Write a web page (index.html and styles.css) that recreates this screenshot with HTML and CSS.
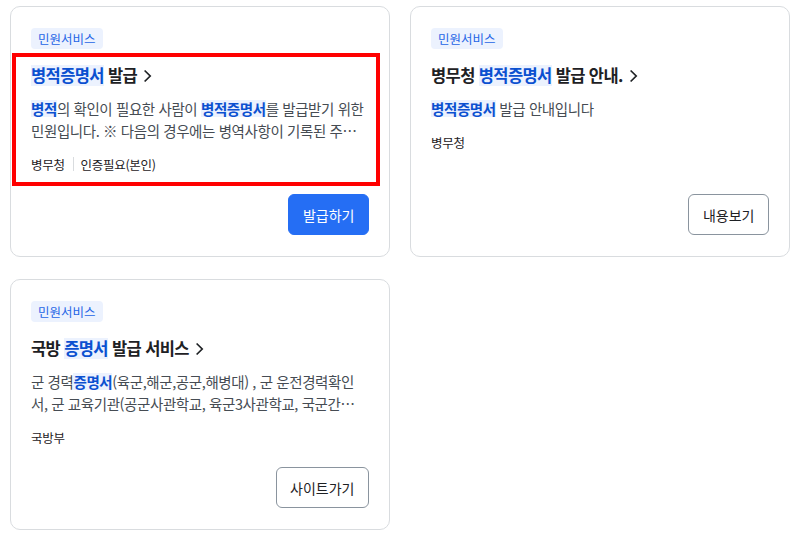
FILE: index.html
```html
<!DOCTYPE html>
<html lang="ko">
<head>
<meta charset="utf-8">
<title>검색 결과</title>
<link rel="stylesheet" href="styles.css">
</head>
<body>
<div class="grid">
  <article class="card">
    <span class="badge">민원서비스</span>
    <div class="title"><span class="hl">병적증명서</span> 발급<svg class="chev" viewBox="0 0 9 14" width="9" height="14"><path d="M1.6 1.5 L7.2 7 L1.6 12.5"/></svg></div>
    <p class="desc"><span class="hl">병적</span>의 확인이 필요한 사람이 <span class="hl">병적증명서</span>를 발급받기 위한 민원입니다. ※ 다음의 경우에는 병역사항이 기록된 주민등록표 초본을 발급받으시기 바랍니다.</p>
    <div class="meta"><span>병무청</span><span class="sep"></span><span>인증필요(본인)</span></div>
    <div class="actions"><button class="btn primary">발급하기</button></div>
    <div class="focus-ring"></div>
  </article>
  <article class="card">
    <span class="badge">민원서비스</span>
    <div class="title">병무청 <span class="hl">병적증명서</span> 발급 안내.<svg class="chev" viewBox="0 0 9 14" width="9" height="14"><path d="M1.6 1.5 L7.2 7 L1.6 12.5"/></svg></div>
    <p class="desc"><span class="hl">병적증명서</span> 발급 안내입니다</p>
    <div class="meta"><span>병무청</span></div>
    <div class="actions"><button class="btn outline">내용보기</button></div>
  </article>
  <article class="card">
    <span class="badge">민원서비스</span>
    <div class="title">국방 <span class="hl">증명서</span> 발급 서비스<svg class="chev" viewBox="0 0 9 14" width="9" height="14"><path d="M1.6 1.5 L7.2 7 L1.6 12.5"/></svg></div>
    <p class="desc">군 경력<span class="hl">증명서</span>(육군,해군,공군,해병대) , 군 운전경력확인서, 군 교육기관(공군사관학교, 육군3사관학교, 국군간호사관학교) 졸업증명서 등 발급</p>
    <div class="meta"><span>국방부</span></div>
    <div class="actions"><button class="btn outline">사이트가기</button></div>
  </article>
</div>
</body>
</html>
```
FILE: styles.css
```css
* { box-sizing: border-box; }
html, body { margin: 0; padding: 0; background: #fff; }
body {
  font-family: "Noto Sans CJK KR", "Noto Sans", sans-serif;
  color: #1e2124;
}
.grid {
  display: grid;
  grid-template-columns: 380px 380px;
  column-gap: 20px;
  row-gap: 22px;
  padding: 6px 10px;
}
.card {
  position: relative;
  display: flex;
  flex-direction: column;
  height: 251px;
  padding: 21px 20px 21px 20px;
  border: 1px solid #d9dcdf;
  border-radius: 10px;
  background: #fff;
}
.badge {
  align-self: flex-start;
  display: inline-flex;
  align-items: center;
  height: 21px;
  padding: 0 7px;
  border-radius: 4px;
  background: #ecf2fe;
  color: #2565e6;
  font-size: 12.5px;
}
.title {
  margin-top: 13px;
  font-size: 16.5px;
  line-height: 26px;
  font-weight: 700;
  letter-spacing: -0.6px;
  color: #1e2124;
}
.hl {
  display: inline-block;
  background: #ecf2fe;
  color: #0b50d0;
  font-weight: 700;
}
.title .hl { line-height: 21px; }
.chev {
  margin-left: 6px;
  vertical-align: -1px;
  fill: none;
  stroke: #1e2124;
  stroke-width: 1.7;
}
.desc {
  margin: 10px 0 0;
  padding-right: 4px;
  font-size: 14.5px;
  line-height: 22px;
  letter-spacing: -0.4px;
  color: #464c53;
  display: -webkit-box;
  -webkit-box-orient: vertical;
  -webkit-line-clamp: 2;
  overflow: hidden;
}
.desc .hl { line-height: 17px; }
.meta {
  display: flex;
  align-items: center;
  margin-top: 12px;
  height: 20px;
  font-size: 12.5px;
  letter-spacing: -0.3px;
  color: #1e2124;
}
.sep {
  width: 1px;
  height: 14px;
  margin: 0 7px 0 8px;
  background: #d9dcdf;
}
.actions {
  margin-top: auto;
  display: flex;
  justify-content: flex-end;
}
.btn {
  height: 41px;
  padding: 0 13.5px;
  border-radius: 6px;
  font-family: inherit;
  font-size: 14px;
  cursor: pointer;
}
.btn.primary {
  background: #256ef4;
  border: 1px solid #256ef4;
  color: #fff;
}
.btn.outline {
  background: #fff;
  border: 1px solid #8a949e;
  color: #1e2124;
}
.focus-ring {
  position: absolute;
  left: 1px;
  top: 46px;
  width: 368px;
  height: 133px;
  border: 4px solid #ff0000;
  pointer-events: none;
}
```
